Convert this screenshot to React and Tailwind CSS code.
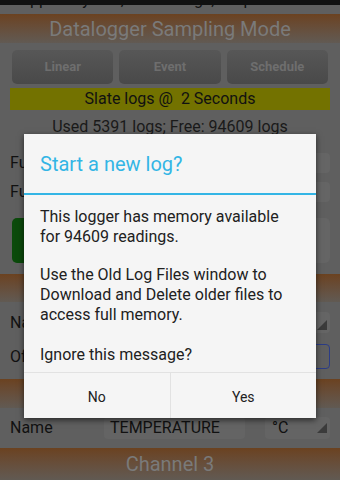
import React from 'react';

const Corner = () => (
  <svg width="10" height="10" viewBox="0 0 10 10" className="shrink-0">
    <polygon points="10,0 10,10 0,10" fill="#3b3b3b" />
  </svg>
);

const Band = ({ children, h }) => (
  <div className={`${h} bg-gradient-to-b from-[#6b4220] to-[#615a53] flex items-center justify-center text-[20px] text-[#7a7a7a]`}>
    {children}
  </div>
);

const App = () => {
  return (
    <div className="relative w-[340px] h-[480px] overflow-hidden bg-[#5f5f5f] font-['Roboto',sans-serif]">
      {/* clipped text from the previous screen */}
      <div className="h-[14px] overflow-hidden">
        <div className="h-[5px] bg-[#111]" />
        <div className="-mt-[15px] pl-[22px] whitespace-pre text-[16px] leading-[20px] text-[#111]">
          {'  pp  ately 100,000 rea  ngs, s  upto'}
        </div>
      </div>

      <Band h="h-[29px]">Datalogger Sampling Mode</Band>

      <div className="mt-[7px] mx-[12px] flex gap-[6px]">
        {['Linear', 'Event', 'Schedule'].map(l => (
          <div key={l} className="flex-1 h-[34px] rounded-[5px] bg-gradient-to-b from-[#575757] to-[#494949] flex items-center justify-center text-[13px] font-bold text-[#6e6e6e]">
            {l}
          </div>
        ))}
      </div>

      <div className="mt-[4px] mx-[10px] h-[22px] bg-[#737200] flex items-center justify-center whitespace-pre text-[16px] text-[#111]">
        {'Slate logs @  2 Seconds'}
      </div>

      <div className="mt-[7px] h-[20px] flex items-center justify-center text-[16px] text-[#1a1a1a]">
        Used 5391 logs; Free: 94609 logs
      </div>

      {/* rows mostly hidden behind the dialog */}
      <div className="mt-[14px] h-[24px] pl-[10px] pr-[10px] flex items-center justify-between text-[16px] text-[#111]">
        <span>Fu</span>
        <div className="w-[160px] h-[20px] rounded-[4px] bg-[#656565]" />
      </div>
      <div className="mt-[5px] h-[24px] pl-[10px] pr-[10px] flex items-center justify-between text-[16px] text-[#111]">
        <span>Fu</span>
        <div className="w-[160px] h-[20px] rounded-[4px] bg-[#656565]" />
      </div>

      <div className="mt-[14px] mx-[12px] h-[45px] flex gap-[8px]">
        <div className="flex-1 rounded-[5px] bg-[#0b4a0b]" />
        <div className="w-[150px] mr-[-2px] rounded-[5px] bg-[#656565]" />
      </div>

      <Band h="mt-[11px] h-[28px]" />

      <div className="mt-[8px] h-[25px] px-[10px] flex items-center justify-between text-[16px] text-[#111]">
        <span>Na</span>
        <div className="w-[65px] h-[21px] rounded-[4px] bg-[#656565] flex items-end justify-end pr-[3px] pb-[3px]">
          <Corner />
        </div>
      </div>
      <div className="mt-[8px] h-[27px] px-[10px] flex items-center justify-between text-[16px] text-[#111]">
        <span>Of</span>
        <div className="w-[65px] h-[25px] rounded-[4px] border border-[#2b3c86]" />
      </div>

      <Band h="mt-[9px] h-[29px]" />

      <div className="h-[40px] pl-[10px] pr-[10px] flex items-center text-[16px] text-[#111]">
        <span className="w-[94px]">Name</span>
        <div className="w-[141px] h-[22px] rounded-[4px] bg-[#646464] flex items-center pl-[6px]">TEMPERATURE</div>
        <div className="ml-auto w-[65px] h-[22px] rounded-[4px] bg-[#646464] flex items-center justify-between pl-[7px] pr-[3px]">
          <span>°C</span>
          <Corner />
        </div>
      </div>

      <Band h="h-[32px]">Channel 3</Band>

      {/* dialog */}
      <div className="absolute left-[24px] top-[134px] w-[292px] h-[284px] bg-[#f5f5f5] shadow-[0_2px_6px_rgba(0,0,0,0.6)] flex flex-col">
        <div className="h-[59px] pl-[16px] flex items-center text-[20px] text-[#33b5e5]">Start a new log?</div>
        <div className="h-[2px] bg-[#33b5e5]" />
        <div className="pt-[12px] px-[16px] text-[16px] leading-[20px] text-[#212121] whitespace-nowrap">
          <div>This logger has memory available<br />for 94609 readings.</div>
          <div className="mt-[18px]">Use the Old Log Files window to<br />Download and Delete older files to<br />access full memory.</div>
          <div className="mt-[20px]">Ignore this message?</div>
        </div>
        <div className="mt-auto h-[46px] border-t border-[#e2e2e2] flex text-[14px] text-[#212121]">
          <div className="flex-1 flex items-center justify-center pt-[3px]">No</div>
          <div className="w-px bg-[#e2e2e2]" />
          <div className="flex-1 flex items-center justify-center pt-[3px]">Yes</div>
        </div>
      </div>
    </div>
  );
};

export default App;
